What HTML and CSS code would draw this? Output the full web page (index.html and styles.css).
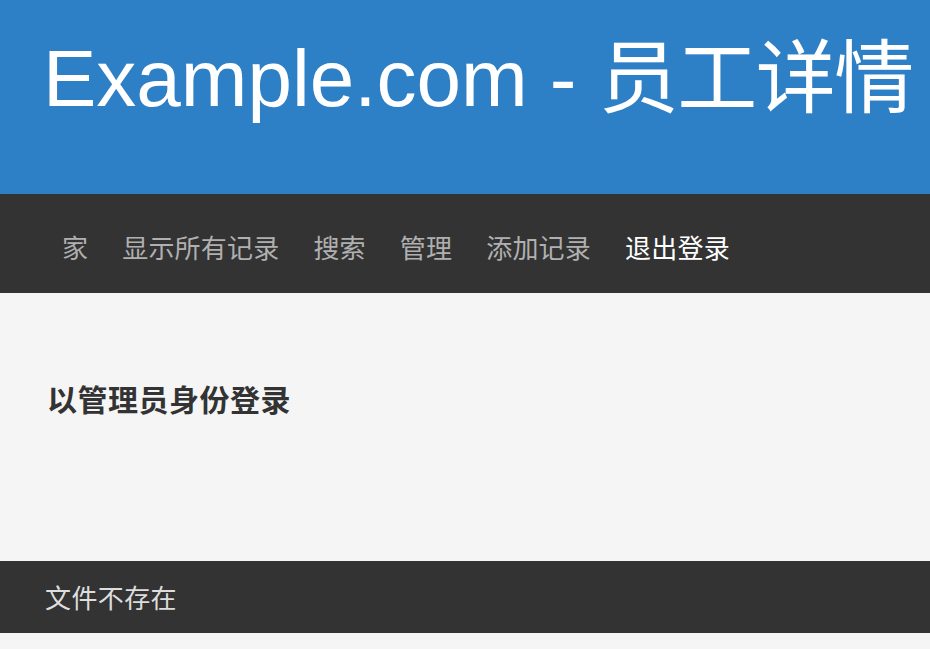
FILE: index.html
```html
<!DOCTYPE html>
<html lang="zh-CN">
<head>
<meta charset="utf-8">
<title>Example.com - 员工详情</title>
<link rel="stylesheet" href="styles.css">
</head>
<body>
<header class="site-header">
  <h1 class="site-title">Example.com - <span class="title-cjk">员工详情</span></h1>
</header>
<nav class="site-nav">
  <a class="nav-link" href="#">家</a>
  <a class="nav-link" href="#">显示所有记录</a>
  <a class="nav-link" href="#">搜索</a>
  <a class="nav-link" href="#">管理</a>
  <a class="nav-link" href="#">添加记录</a>
  <a class="nav-link nav-link-active" href="#">退出登录</a>
</nav>
<main class="site-main">
  <h2 class="page-heading">以管理员身份登录</h2>
</main>
<footer class="site-footer">
  <p class="footer-text">文件不存在</p>
</footer>
</body>
</html>
```

FILE: styles.css
```css
html, body {
  margin: 0;
  padding: 0;
}

body {
  background: #f5f5f5;
  font-family: "Liberation Sans", "Noto Sans CJK SC", sans-serif;
  color: #333;
}

.site-header {
  background: #2d7fc6;
  height: 194px;
  box-sizing: border-box;
  padding: 39px 0 0 43px;
  overflow: hidden;
}

.site-title {
  margin: 0;
  font-size: 80px;
  line-height: 80px;
  font-weight: normal;
  color: #fff;
  white-space: nowrap;
}

.title-cjk {
  letter-spacing: -1.5px;
}

.site-nav {
  background: #333;
  height: 99px;
  box-sizing: border-box;
  padding: 42px 0 0 45px;
  display: flex;
}

.nav-link {
  display: block;
  padding: 0 17px;
  font-size: 26px;
  line-height: 26px;
  letter-spacing: 0.2px;
  color: #b0b0b0;
  text-decoration: none;
  white-space: nowrap;
}

.nav-link-active {
  color: #fff;
}

.site-main {
  height: 268px;
  box-sizing: border-box;
  padding: 93px 0 0 47px;
  background: #f5f5f5;
}

.page-heading {
  margin: 0;
  font-size: 30px;
  line-height: 30px;
  letter-spacing: 0.5px;
  font-weight: bold;
  color: #333;
}

.site-footer {
  background: #333;
  height: 72px;
  box-sizing: border-box;
  padding: 25px 0 0 45px;
}

.footer-text {
  margin: 0;
  font-size: 26px;
  line-height: 26px;
  letter-spacing: 0.4px;
  color: #ddd;
}
```
